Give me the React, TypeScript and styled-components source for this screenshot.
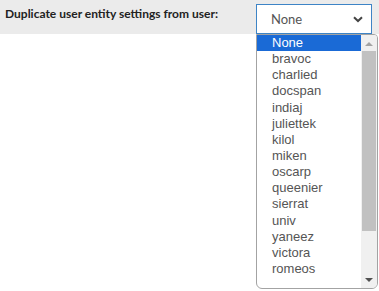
import React from 'react'
import styled, { createGlobalStyle } from 'styled-components'

const GlobalStyle = createGlobalStyle`
  body {
    margin: 0;
    background: #ffffff;
  }
`

const users = [
  'None',
  'bravoc',
  'charlied',
  'docspan',
  'indiaj',
  'juliettek',
  'kilol',
  'miken',
  'oscarp',
  'queenier',
  'sierrat',
  'univ',
  'yaneez',
  'victora',
  'romeos',
]

const Page = styled.div`
  position: relative;
  width: 379px;
  height: 291px;
  overflow: hidden;
`

const Toolbar = styled.div`
  display: flex;
  align-items: flex-start;
  height: 34px;
  box-sizing: border-box;
  padding: 4px 0 0 5px;
  background: #ebebeb;
`

const Label = styled.label`
  width: 251px;
  padding-top: 2px;
  font-family: Lato, 'Open Sans', sans-serif;
  font-weight: 700;
  font-size: 12px;
  color: #222;
`

const SelectBox = styled.div`
  display: flex;
  align-items: center;
  justify-content: space-between;
  width: 116px;
  height: 30px;
  box-sizing: border-box;
  padding: 0 8px 0 14px;
  border: 1px solid #3d84c6;
  background: #fff;
  font-family: Lato, 'Open Sans', sans-serif;
  font-size: 13px;
  color: #555;
`

const Dropdown = styled.div`
  position: absolute;
  top: 34px;
  left: 256px;
  width: 122px;
  height: 255px;
  box-sizing: border-box;
  display: flex;
  border: 1px solid #a3a3a3;
  border-radius: 0 4px 6px 6px;
  background: #fff;
  overflow: hidden;
`

const List = styled.ul`
  flex: 1;
  margin: 0;
  padding: 0;
  list-style: none;
`

const Item = styled.li<{ $active?: boolean }>`
  height: 16.15px;
  line-height: 15px;
  padding-left: 15px;
  font-family: 'Liberation Sans', Arial, sans-serif;
  font-size: 13px;
  color: ${(p) => (p.$active ? '#fff' : '#555')};
  background: ${(p) => (p.$active ? '#1a6ad6' : 'transparent')};
`

const Scrollbar = styled.div`
  display: flex;
  flex-direction: column;
  width: 16px;
  background: #f0f0f0;
`

const ArrowButton = styled.div`
  display: flex;
  align-items: center;
  justify-content: center;
  height: 16px;
`

const Track = styled.div`
  flex: 1;
  padding: 0 1px;
`

const Thumb = styled.div`
  height: 180px;
  background: #c1c1c1;
`

const Chevron = () => (
  <svg width="10" height="7" viewBox="0 0 10 7">
    <path d="M1 1.2 L5 5 L9 1.2" fill="none" stroke="#444" strokeWidth="2" />
  </svg>
)

const Triangle = ({ down }: { down?: boolean }) => (
  <svg width="8" height="5" viewBox="0 0 8 5">
    <path d={down ? 'M0 0 H8 L4 4 Z' : 'M0 5 H8 L4 1 Z'} fill={down ? '#505050' : '#a3a3a3'} />
  </svg>
)

export default function App() {
  return (
    <Page>
      <GlobalStyle />
      <Toolbar>
        <Label>Duplicate user entity settings from user:</Label>
        <SelectBox>
          <span>None</span>
          <Chevron />
        </SelectBox>
      </Toolbar>
      <Dropdown>
        <List>
          {users.map((u, i) => (
            <Item key={u} $active={i === 0}>
              {u}
            </Item>
          ))}
        </List>
        <Scrollbar>
          <ArrowButton>
            <Triangle />
          </ArrowButton>
          <Track>
            <Thumb />
          </Track>
          <ArrowButton>
            <Triangle down />
          </ArrowButton>
        </Scrollbar>
      </Dropdown>
    </Page>
  )
}
